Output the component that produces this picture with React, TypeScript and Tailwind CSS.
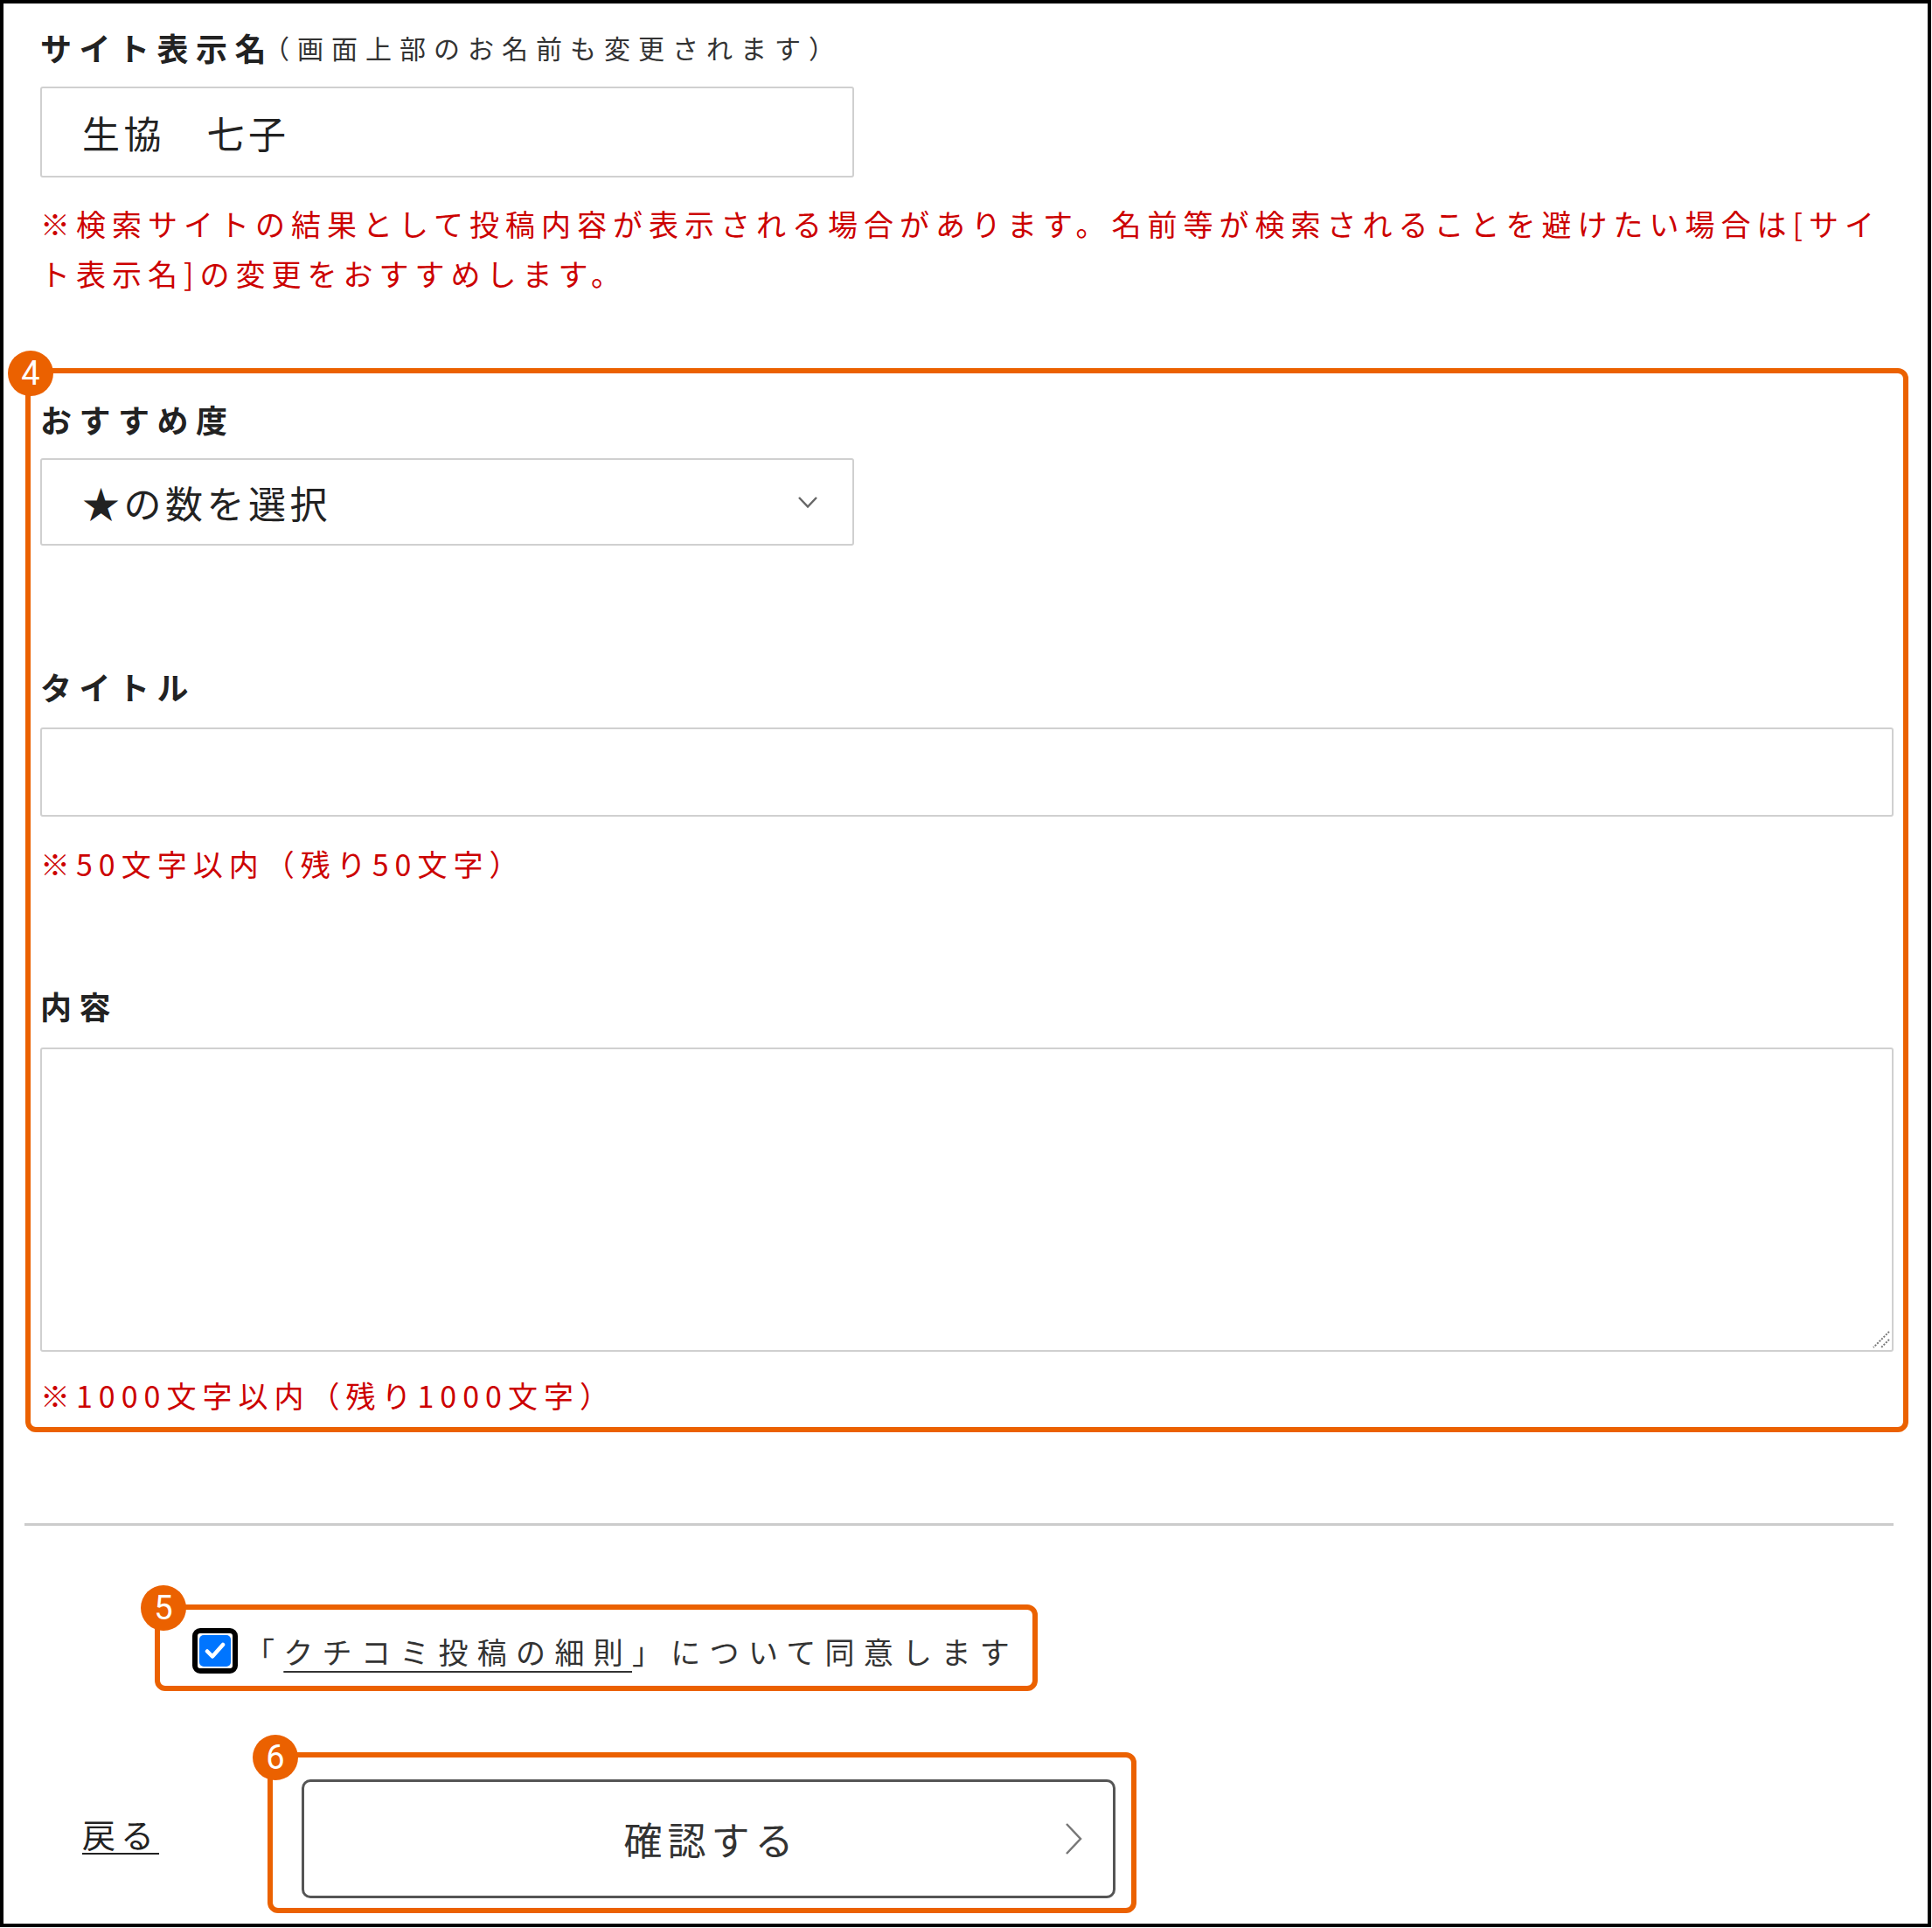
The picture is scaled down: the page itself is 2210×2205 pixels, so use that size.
import React from "react";

function Badge({ n, cls }: { n: string; cls: string }) {
  return (
    <div
      className={
        "absolute w-[52px] h-[52px] rounded-full bg-[#eb6100] text-white flex items-center justify-center text-[38px] leading-none font-['Roboto','Liberation_Sans',sans-serif] " +
        cls
      }
    >
      {n}
    </div>
  );
}

export default function App() {
  return (
    <div className="w-[2210px] h-[2205px] bg-white">
      <div className="w-[2209px] h-[2204px] border-4 border-black text-[#222] font-['Noto_Sans_CJK_JP','Noto_Sans',sans-serif]">
        <div className="ml-[42px] w-[2120px] pt-[20px]">
          <p className="h-[60px] leading-[60px] whitespace-nowrap">
            <span className="text-[36px] font-bold tracking-[8.5px]">サイト表示名</span>
            <span className="inline-block -ml-[12px] text-[30px] tracking-[9px] text-[#333] relative -top-[3px]">（画面上部のお名前も変更されます）</span>
          </p>
          <input
            readOnly
            defaultValue="生協　七子"
            className="block mt-[15px] w-[931px] h-[104px] border-2 border-[#d0d0d0] rounded-[3px] px-[46px] text-[43px] tracking-[4.5px] text-[#222] outline-none"
          />
          <p className="mt-[24px] text-[34px] tracking-[7px] leading-[57px] text-[#cc0000]">
            ※検索サイトの結果として投稿内容が表示される場合があります。名前等が検索されることを避けたい場合は[サイト表示名]の変更をおすすめします。
          </p>

          <div className="relative mt-[80px] -mx-[17px] border-[6px] border-[#eb6100] rounded-[12px] px-[11px] pt-[22px] pb-[8px]">
            <Badge n="4" cls="left-[-26px] top-[-26px]" />
            <div className="h-[60px] leading-[60px] text-[36px] font-bold tracking-[8.5px]">おすすめ度</div>
            <div className="mt-[15px] w-[931px] h-[100px] border-2 border-[#d0d0d0] rounded-[3px] flex items-center justify-between pl-[46px] pr-[39px]">
              <span className="text-[43px] tracking-[4.5px] text-[#222]">★の数を選択</span>
              <svg width="24" height="15" viewBox="0 0 24 15" fill="none">
                <polyline points="2,2 12,12.5 22,2" stroke="#666" strokeWidth="2.5" />
              </svg>
            </div>

            <div className="mt-[131px] h-[60px] leading-[60px] text-[36px] font-bold tracking-[8.5px]">タイトル</div>
            <input
              readOnly
              className="block mt-[17px] w-full h-[102px] border-2 border-[#d0d0d0] rounded-[3px] outline-none"
            />
            <p className="mt-[25px] text-[34px] tracking-[7px] leading-[57px] text-[#cc0000]">※50文字以内（残り50文字）</p>

            <div className="mt-[104px] h-[60px] leading-[60px] text-[36px] font-bold tracking-[8.5px]">内容</div>
            <div className="relative mt-[18px] w-full h-[348px]">
              <textarea
                readOnly
                className="block w-full h-full border-2 border-[#d0d0d0] rounded-[3px] resize-none outline-none"
              />
              <svg className="absolute right-[4px] bottom-[4px]" width="20" height="20" viewBox="0 0 20 20" fill="none">
                <line x1="19" y1="1" x2="1" y2="19" stroke="#777" strokeWidth="2" strokeDasharray="2 1.5" />
                <line x1="19" y1="10" x2="10" y2="19" stroke="#777" strokeWidth="2" strokeDasharray="2 1.5" />
              </svg>
            </div>
            <p className="mt-[21px] text-[34px] tracking-[7px] leading-[57px] text-[#cc0000]">※1000文字以内（残り1000文字）</p>
          </div>

          <div className="mt-[104px] -ml-[18px] w-[2138px] h-[3px] bg-[#cccccc]" />

          <div className="relative mt-[90px] ml-[131px] w-[1010px] h-[99px] border-[6px] border-[#eb6100] rounded-[12px] flex items-center pl-[37px] pt-[7px]">
            <Badge n="5" cls="left-[-22px] top-[-28px]" />
            <span className="w-[52px] h-[52px] border-[6px] border-black rounded-[9px] bg-white p-[2px] flex">
              <span className="flex-1 rounded-[5px] bg-[#0075ff] flex items-center justify-center">
                <svg width="30" height="30" viewBox="0 0 30 30" fill="none">
                  <polyline points="6,15.5 12,21.5 24,8" stroke="white" strokeWidth="4.5" strokeLinecap="round" strokeLinejoin="round" />
                </svg>
              </span>
            </span>
            <span className="ml-[8px] text-[34px] tracking-[10.3px] text-[#333] whitespace-nowrap">
              「<span className="underline decoration-[2px] underline-offset-[8px]">クチコミ投稿の細則</span>」について同意します
            </span>
          </div>

          <div className="mt-[70px] flex items-center">
            <div className="w-[260px] pl-[48px]">
              <span className="text-[38px] tracking-[6px] text-[#222] underline decoration-[2px] underline-offset-[6px]">戻る</span>
            </div>
            <div className="relative w-[994px] h-[184px] border-[6px] border-[#eb6100] rounded-[12px] pl-[33px] pt-[25px]">
              <Badge n="6" cls="left-[-23px] top-[-26px]" />
              <div className="w-[931px] h-[136px] border-[3px] border-[#555] rounded-[10px] flex items-center justify-center relative">
                <span className="text-[44px] tracking-[6px] text-[#333] pl-[6px]">確認する</span>
                <svg className="absolute right-[34px] top-1/2 -translate-y-1/2" width="22" height="38" viewBox="0 0 22 38" fill="none">
                  <polyline points="3,2 19,19 3,36" stroke="#777" strokeWidth="2.5" />
                </svg>
              </div>
            </div>
          </div>
        </div>
      </div>
    </div>
  );
}
